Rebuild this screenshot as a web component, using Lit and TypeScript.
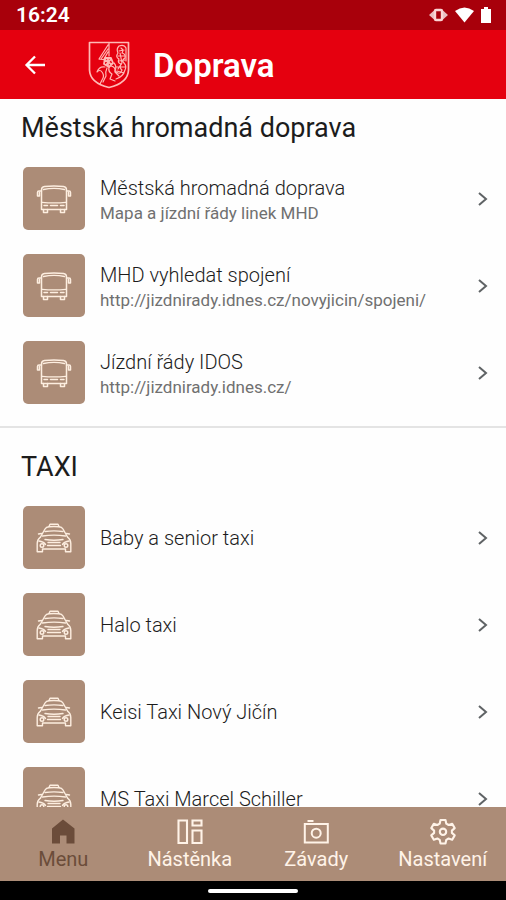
import { LitElement, html, svg, css } from "lit";
import { customElement, property } from "lit/decorators.js";

interface Entry {
  title: string;
  note?: string;
}

interface Group {
  name: string;
  icon: "bus" | "taxi";
  entries: Entry[];
}

const groups: Group[] = [
  {
    name: "Městská hromadná doprava",
    icon: "bus",
    entries: [
      { title: "Městská hromadná doprava", note: "Mapa a jízdní řády linek MHD" },
      { title: "MHD vyhledat spojení", note: "http://jizdnirady.idnes.cz/novyjicin/spojeni/" },
      { title: "Jízdní řády IDOS", note: "http://jizdnirady.idnes.cz/" },
    ],
  },
  {
    name: "TAXI",
    icon: "taxi",
    entries: [
      { title: "Baby a senior taxi" },
      { title: "Halo taxi" },
      { title: "Keisi Taxi Nový Jičín" },
      { title: "MS Taxi Marcel Schiller" },
    ],
  },
];

const line = (size: string, body: unknown, width = 1.4) => html`
  <svg viewBox=${"0 0 " + size} width=${size.split(" ")[0]} height=${size.split(" ")[1]}
    fill="none" stroke="currentColor" stroke-width=${width}
    stroke-linejoin="round" stroke-linecap="round" aria-hidden="true">${body}</svg>`;

const icons = {
  bus: () => line("36 30", svg`
    <path d="M5.500 25.500V6Q5.500 3 8.500 2.600Q18 1.200 27.500 2.600Q30.500 3 30.500 6V25.500Z"/>
    <path d="M6 18.300Q18 19.300 30 18.300M7.500 5.500Q18 3.200 28.500 5.500" stroke-width="1.300"/>
    <path d="M5.500 7H3Q1.500 7 1.500 8.500V12H3.500V8.500M30.500 7H33Q34.500 7 34.500 8.500V12H32.500V8.500"/>
    <path d="M8 21.500H11.500M24.500 21.500H28M14.500 21.500H21.500"/>
    <path d="M7.500 25.500V28.500H11.500V25.500M24.500 25.500V28.500H28.500V25.500"/>`, 1.5),
  taxi: () => line("36 30", svg`
    <path d="M13 3.500L14 1.200H22L23 3.500"/>
    <path d="M4.500 14L9 6Q10.200 4 13 3.700Q18 3.200 23 3.700Q25.800 4 27 6L31.500 14"/>
    <path d="M9 8.500Q18 7.300 27 8.500M6.500 13Q18 11.300 29.500 13"/>
    <path d="M5.500 10.500L2.500 11M30.500 10.500L33.500 11"/>
    <path d="M4.500 14Q1.200 16.500 1.200 20.500V28.800H6.500V26H29.500V28.800H34.800V20.500Q34.800 16.500 31.500 14"/>
    <path d="M9 16.500Q18 18 27 16.500M12 19.500H24M11.500 22.500H24.500"/>
    <path d="M3 18Q7.500 18.500 9.500 21.500M33 18Q28.500 18.500 26.500 21.500"/>
    <circle cx="6" cy="22.500" r="1.800"/><circle cx="30" cy="22.500" r="1.800"/>`, 1.4),
  back: () => line("22 20", svg`<path d="M21 10H2.500M11 1.500L2.500 10L11 18.500" stroke-linecap="butt" stroke-linejoin="miter"/>`, 2.3),
  chevron: () => line("12 16", svg`<path d="M2 2L9 8L2 14" stroke-linecap="butt" stroke-linejoin="miter"/>`, 2),
  crest: () => line("42 48", svg`
    <path d="M1.500 1.500H40.500V29Q40 42 21 46.500Q2 42 1.500 29Z" stroke-width="1.700"/>
    <g stroke-width="1.200">
      <path d="M21 2V15M20 4L11 18M20 8L13 18M20 11L16 18M11 18L18 19"/>
      <path d="M17 17L23 17L25 22L21 26L16 23ZM17 19L23 23M18 24L23 18M20 17V25" stroke-width="1.800"/>
      <path d="M17 26Q11 25 9 31Q12 28 14 31Q17 35 14 39L12 43M19 27Q17 31 18 35L15 41M21 26Q20 31 24 33L22 38L27 40M23 25Q28 26 27 31L31 35"/>
      <path d="M26 22Q29 25 27 30Q32 35 34 29Q31 27 33 23Q29 22 31 18Q27 16 30 12Q28 8 31 5Q36 3 38 7V20"/>
      <path d="M33 7Q36 9 34 12Q38 13 37 17Q33 19 36 22Q39 25 37 29Q35 36 28 38M31 10L36 9M30 15L36 15M31 20L37 19M28 26L37 26M29 30L36 32M32 12L34 22L30 28"/>
    </g>`),
  menu: () => html`<svg viewBox="0 0 28 28" width="28" height="28" fill="currentColor" aria-hidden="true">
    <path d="M14 1.500L25.500 10.500V25.500H17.500V17.500H11V25.500H3V10.500Z"/></svg>`,
  board: () => line("28 28", svg`
    <path d="M2.500 2.500H11V25H2.500ZM16.500 2.500H25.500V7.500H16.500ZM16.500 12.500H25.500V25H16.500Z" stroke-linejoin="miter"/>`, 2.1),
  camera: () => line("28 28", svg`
    <path d="M2.800 6H25.800V24.500H2.800Z" stroke-linejoin="miter"/>
    <path d="M5.500 3H11.500" stroke-linecap="butt"/><circle cx="14.200" cy="15.200" r="4.500"/>`, 2),
  gear: () => line("28 28", svg`
    <path d="M11.500 2H16.500L17.300 5.700L19.600 7L23.200 5.800L25.700 10.100L22.900 12.600V14.900L25.700 17.400L23.200 21.700L19.600 20.500L17.300 21.800L16.500 25.500H11.500L10.700 21.800L8.400 20.500L4.800 21.700L2.300 17.400L5.100 14.900V12.600L2.300 10.100L4.800 5.800L8.400 7L10.700 5.700Z"/>
    <circle cx="14" cy="13.800" r="3.200"/>`, 2.1),
};

@customElement("status-bar")
export class StatusBar extends LitElement {
  static styles = css`
    :host {
      display: flex;
      align-items: center;
      justify-content: space-between;
      flex: none;
      height: 30px;
      padding: 0 12px 0 16px;
      background: #a8000b;
      color: #fff;
      font-size: 21px;
      font-weight: 600;
      line-height: 32px;
    }
    .signs { display: flex; align-items: center; }
  `;

  render() {
    return html`
      <time>16:24</time>
      <span class="signs">
        <svg viewBox="0 0 66 20" width="66" height="20" fill="#fff" aria-hidden="true">
          <path d="M1 10L6 5.500V14.500ZM20 10L15 5.500V14.500Z" opacity=".75"/>
          <rect x="7" y="5" width="7" height="10" rx="1" fill="none" stroke="#fbd5d5" stroke-width="2.400"/>
          <path d="M27 6Q36.500 -1 46 6L36.500 17.500Z"/>
          <path d="M53 4H56V2H60V4H63V18H53Z"/>
        </svg>
      </span>
    `;
  }
}

@customElement("link-row")
export class LinkRow extends LitElement {
  @property({ attribute: false }) entry!: Entry;
  @property() icon: "bus" | "taxi" = "bus";

  static styles = css`
    :host { display: block; }
    .row {
      display: flex;
      align-items: center;
      gap: 15px;
      padding: 12px 17px 12px 23px;
      color: #1c1c1c;
      text-decoration: none;
    }
    .tile {
      display: flex;
      align-items: center;
      justify-content: center;
      flex: none;
      width: 62px;
      height: 63px;
      border-radius: 5px;
      background: #ac8c77;
      color: #fdeee0;
    }
    .text { flex: 1; min-width: 0; }
    .title, .note { display: block; }
    .title { font-size: 20px; font-weight: 350; line-height: 28px; }
    .note { font-size: 17px; line-height: 22px; color: #707070; }
    .arrow { display: flex; color: #5f6365; }
  `;

  render() {
    return html`
      <a class="row" href="#">
        <span class="tile">${icons[this.icon]()}</span>
        <span class="text">
          <span class="title">${this.entry.title}</span>
          ${this.entry.note ? html`<span class="note">${this.entry.note}</span>` : null}
        </span>
        <span class="arrow">${icons.chevron()}</span>
      </a>
    `;
  }
}

@customElement("tab-bar")
export class TabBar extends LitElement {
  static styles = css`
    :host { display: block; flex: none; background: #ac8c77; }
    .tabs { display: grid; grid-template-columns: repeat(4, 1fr); }
    .tab {
      display: flex;
      flex-direction: column;
      align-items: center;
      padding: 11px 0 9px;
      color: #fff3e8;
      font-size: 20px;
      line-height: 26px;
      text-decoration: none;
    }
    .current { color: #6b4c3a; }
  `;

  render() {
    return html`
      <nav class="tabs">
        <a class="tab current" href="#" aria-current="page">${icons.menu()}Menu</a>
        <a class="tab" href="#">${icons.board()}Nástěnka</a>
        <a class="tab" href="#">${icons.camera()}Závady</a>
        <a class="tab" href="#">${icons.gear()}Nastavení</a>
      </nav>
    `;
  }
}

@customElement("app-root")
export class AppRoot extends LitElement {
  static styles = css`
    :host {
      display: flex;
      flex-direction: column;
      height: 100vh;
      background: #fefefe;
      color: #1c1c1c;
      font-family: Roboto, "Noto Sans", sans-serif;
    }
    .bar {
      display: flex;
      align-items: center;
      flex: none;
      height: 69px;
      padding: 0 24px;
      background: #e5000f;
      color: #fff;
    }
    .back {
      display: flex;
      padding: 0;
      border: 0;
      background: none;
      color: inherit;
    }
    .crest { display: flex; margin: 0 23px 0 42px; color: #ffb9b5; }
    .name { margin: 0; padding-top: 2px; font-size: 33px; font-weight: 600; line-height: 40px; }
    .content { flex: 1; min-height: 0; overflow-y: auto; scrollbar-width: none; }
    .group { padding-bottom: 10px; }
    .group + .group { padding-top: 10px; border-top: 2px solid #e4e4e4; }
    .heading {
      margin: 0;
      padding: 13px 21px 11px;
      font-size: 27px;
      font-weight: 400;
      line-height: 32px;
    }
    .system {
      display: flex;
      align-items: center;
      justify-content: center;
      flex: none;
      height: 19px;
      background: #000;
    }
    .pill { width: 90px; height: 4px; border-radius: 2px; background: #fff; }
  `;

  render() {
    return html`
      <status-bar></status-bar>
      <header class="bar">
        <button class="back" aria-label="Zpět">${icons.back()}</button>
        <span class="crest">${icons.crest()}</span>
        <h1 class="name">Doprava</h1>
      </header>
      <main class="content">
        ${groups.map((group) => html`
          <section class="group">
            <h2 class="heading">${group.name}</h2>
            ${group.entries.map((entry) => html`<link-row .entry=${entry} icon=${group.icon}></link-row>`)}
          </section>`)}
      </main>
      <tab-bar></tab-bar>
      <footer class="system"><span class="pill"></span></footer>
    `;
  }
}
